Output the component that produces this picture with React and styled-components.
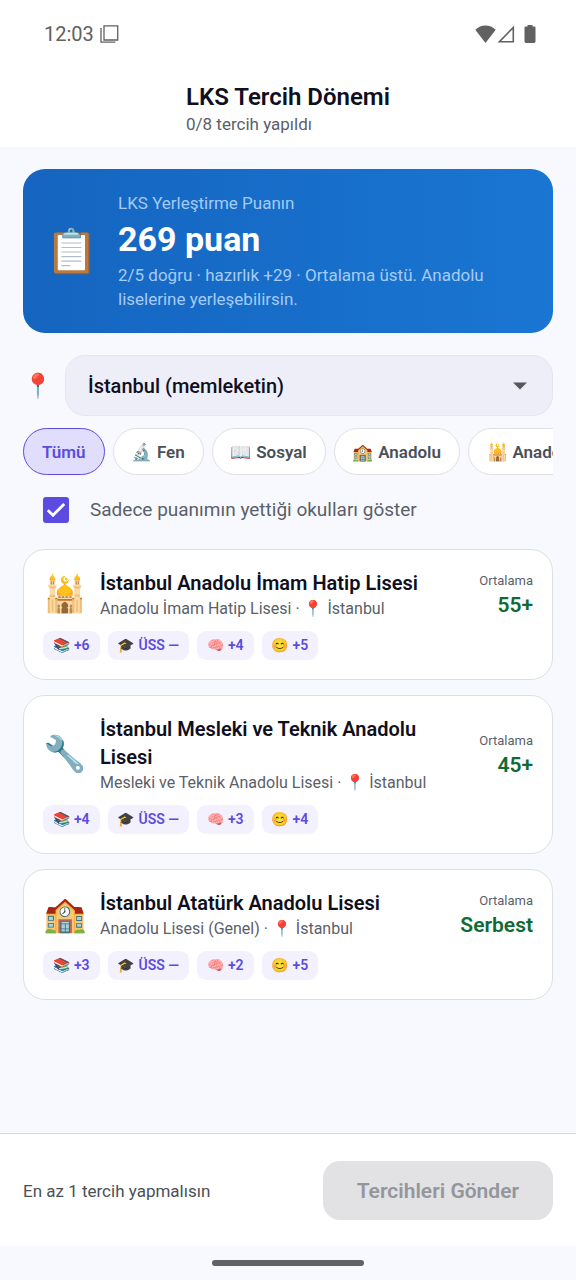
import React, { useState } from "react";
import styled, { createGlobalStyle, css } from "styled-components";

const GlobalStyle = createGlobalStyle`
  *, *::before, *::after {
    box-sizing: border-box;
  }

  body {
    margin: 0;
    background: #f8f9ff;
    color: #0f0f1e;
    font-family: Roboto, "Noto Color Emoji", "Liberation Sans", sans-serif;
  }

  button, select, input {
    font-family: inherit;
  }
`;

const Screen = styled.div`
  min-height: 100vh;
  display: flex;
  flex-direction: column;
`;

const Top = styled.div`
  padding-bottom: 11px;
  background: #fff;
`;

const StatusBar = styled.div`
  display: flex;
  align-items: center;
  justify-content: space-between;
  height: 68px;
  padding: 0 40px 0 44px;
  color: #616161;
  font-size: 20px;
`;

const Clock = styled.div`
  display: flex;
  align-items: center;
  gap: 6px;
`;

const StatusIcons = styled.div`
  display: flex;
  align-items: center;

  svg:last-child {
    margin-left: 9px;
  }
`;

const Header = styled.header`
  display: flex;
  flex-direction: column;
  align-items: flex-start;
  width: fit-content;
  margin: 0 auto;
  padding-top: 14px;
`;

const Title = styled.h1`
  margin: 0;
  font-size: 24px;
  line-height: 30px;
  font-weight: 600;
`;

const Subtitle = styled.p`
  margin: 0;
  color: #5a5f69;
  font-size: 17px;
  line-height: 24px;
`;

const Main = styled.main`
  flex: 1;
  padding: 22px 23px;
`;

const ScoreCard = styled.section`
  display: flex;
  align-items: center;
  gap: 19px;
  padding: 22px;
  border-radius: 22px;
  background: linear-gradient(to right, #1565c0, #1976d2);
  color: #fff;
`;

const ScoreIcon = styled.span`
  width: 54px;
  font-size: 43px;
  line-height: 50px;
  text-align: center;
`;

const ScoreText = styled.div`
  flex: 1;
  color: #a6cbf2;
  font-size: 17px;
  line-height: 24px;
`;

const ScoreValue = styled.strong`
  display: block;
  color: #fff;
  font-size: 34px;
  line-height: 48px;
  font-weight: 700;
`;

const CityRow = styled.label`
  display: flex;
  align-items: center;
  gap: 12px;
  margin-top: 22px;
`;

const CityPin = styled.span`
  width: 30px;
  font-size: 24px;
  text-align: center;
`;

const SelectBox = styled.span`
  flex: 1;
  display: grid;
  align-items: center;

  > * {
    grid-area: 1 / 1;
  }

  svg {
    justify-self: end;
    margin-right: 26px;
    pointer-events: none;
  }
`;

const Select = styled.select`
  appearance: none;
  width: 100%;
  height: 61px;
  padding: 0 50px 0 22px;
  border: 1px solid #e6e6f2;
  border-radius: 20px;
  background: #eeeef9;
  color: #0f0f1e;
  font-size: 20px;
  font-weight: 500;
`;

const Filters = styled.div`
  display: flex;
  gap: 8px;
  margin-top: 12px;
  overflow-x: auto;
  scrollbar-width: none;
`;

const Filter = styled.button`
  flex: none;
  height: 47px;
  padding: 0 18px;
  border: 1px solid #e0e0e4;
  border-radius: 24px;
  background: #fff;
  color: #4b5058;
  font-size: 17px;
  font-weight: 600;
  white-space: nowrap;

  ${({ $active }) =>
    $active &&
    css`
      border-color: #5b4be0;
      background: #e0defc;
      color: #5b4be0;
    `};
`;

const CheckRow = styled.label`
  display: flex;
  align-items: center;
  gap: 21px;
  margin: 21px 20px 26px;
  color: #5a5f69;
  font-size: 19px;
  line-height: 27px;
`;

const CheckBox = styled.span`
  display: grid;
  place-items: center;

  > * {
    grid-area: 1 / 1;
  }

  svg {
    pointer-events: none;
  }
`;

const CheckInput = styled.input`
  appearance: none;
  width: 26px;
  height: 26px;
  margin: 0;
  border: 2px solid #5b4be0;
  border-radius: 3px;

  &:checked {
    background: #5b4be0;
  }
`;

const SchoolList = styled.div`
  display: flex;
  flex-direction: column;
  gap: 15px;
`;

const Card = styled.article`
  padding: 19px;
  border: 1px solid #dedfe3;
  border-radius: 22px;
  background: #fff;
`;

const CardHead = styled.div`
  display: flex;
  align-items: center;
`;

const SchoolIcon = styled.span`
  width: 43px;
  margin-right: 14px;
  font-size: 35px;
  line-height: 44px;
  text-align: center;
`;

const SchoolText = styled.div`
  flex: 1;
`;

const SchoolName = styled.h2`
  margin: 0;
  font-size: 20px;
  line-height: 28px;
  font-weight: 600;
`;

const SchoolKind = styled.p`
  margin: 0;
  color: #5a5f69;
  font-size: 16px;
  line-height: 23px;
`;

const Average = styled.div`
  margin-left: 14px;
  color: #5a5f69;
  font-size: 13px;
  line-height: 20px;
  text-align: right;
`;

const AverageValue = styled.strong`
  display: block;
  color: #0f6b34;
  font-size: 21px;
  line-height: 28px;
  font-weight: 600;
`;

const Stats = styled.div`
  display: flex;
  gap: 8px;
  margin-top: 11px;
`;

const Stat = styled.span`
  padding: 0 10px;
  border-radius: 9px;
  background: #f3f1fd;
  color: #5b4be0;
  font-size: 14px;
  line-height: 29px;
  font-weight: 600;
`;

const Footer = styled.footer`
  display: flex;
  align-items: center;
  justify-content: space-between;
  padding: 27px 23px 26px;
  border-top: 1px solid #d5d8dc;
  background: #fff;
  color: #4b5058;
  font-size: 17px;
`;

const SubmitButton = styled.button`
  height: 59px;
  padding: 0 34px;
  border: 0;
  border-radius: 17px;
  background: #e2e2e5;
  color: #95959c;
  font-size: 21px;
  font-weight: 600;
`;

const NavBar = styled.div`
  display: flex;
  justify-content: center;
  align-items: center;
  height: 34px;
`;

const NavHandle = styled.span`
  width: 152px;
  height: 6px;
  border-radius: 3px;
  background: #606266;
`;

const CopyIcon = () => (
  <svg width="19" height="18" viewBox="0 0 19 18" fill="none" stroke="#616161">
    <path d="M4 .8H17.700V15H4ZM1 3V17.200H15.300" strokeWidth="1.300" />
  </svg>
);

const WifiIcon = () => (
  <svg width="22" height="18" viewBox="0 0 22 18" fill="#616161">
    <path d="M10.500 18 .3 4.800C5.800 -1 15.200 -1 20.700 4.800Z" />
  </svg>
);

const SignalIcon = () => (
  <svg width="18" height="18" viewBox="0 0 18 18" fill="none" stroke="#616161">
    <path d="M16.300 2.400V16.800H2.400Z" strokeWidth="1.600" />
  </svg>
);

const BatteryIcon = () => (
  <svg width="12" height="18" viewBox="0 0 12 18" fill="#616161">
    <path d="M3.500 0h5v1.600H10.500Q11.500 1.600 11.500 2.800V16.600Q11.500 18 10 18H2Q.5 18 .5 16.600V2.800Q.5 1.600 1.500 1.600H3.500Z" />
  </svg>
);

const filters = ["Tümü", "🔬 Fen", "📖 Sosyal", "🏫 Anadolu", "🕌 Anadolu İmam Hatip"];

const schools = [
  {
    icon: "🕌",
    name: "İstanbul Anadolu İmam Hatip Lisesi",
    kind: "Anadolu İmam Hatip Lisesi",
    average: "55+",
    stats: ["📚 +6", "🎓 ÜSS —", "🧠 +4", "😊 +5"]
  },
  {
    icon: "🔧",
    name: "İstanbul Mesleki ve Teknik Anadolu Lisesi",
    kind: "Mesleki ve Teknik Anadolu Lisesi",
    average: "45+",
    stats: ["📚 +4", "🎓 ÜSS —", "🧠 +3", "😊 +4"]
  },
  {
    icon: "🏫",
    name: "İstanbul Atatürk Anadolu Lisesi",
    kind: "Anadolu Lisesi (Genel)",
    average: "Serbest",
    stats: ["📚 +3", "🎓 ÜSS —", "🧠 +2", "😊 +5"]
  }
];

const School = ({ school: { icon, name, kind, average, stats } }) => (
  <Card>
    <CardHead>
      <SchoolIcon>{icon}</SchoolIcon>
      <SchoolText>
        <SchoolName>{name}</SchoolName>
        <SchoolKind>{kind} · 📍 İstanbul</SchoolKind>
      </SchoolText>
      <Average>
        Ortalama
        <AverageValue>{average}</AverageValue>
      </Average>
    </CardHead>
    <Stats>
      {stats.map(stat => (
        <Stat key={stat}>{stat}</Stat>
      ))}
    </Stats>
  </Card>
);

const App = () => {
  const [filter, setFilter] = useState(filters[0]);
  const [onlyReachable, setOnlyReachable] = useState(true);

  return (
    <Screen>
      <GlobalStyle />
      <Top>
        <StatusBar>
          <Clock>
            12:03
            <CopyIcon />
          </Clock>
          <StatusIcons>
            <WifiIcon />
            <SignalIcon />
            <BatteryIcon />
          </StatusIcons>
        </StatusBar>
        <Header>
          <Title>LKS Tercih Dönemi</Title>
          <Subtitle>0/8 tercih yapıldı</Subtitle>
        </Header>
      </Top>
      <Main>
        <ScoreCard>
          <ScoreIcon>📋</ScoreIcon>
          <ScoreText>
            LKS Yerleştirme Puanın
            <ScoreValue>269 puan</ScoreValue>
            2/5 doğru · hazırlık +29 · Ortalama üstü. Anadolu liselerine
            yerleşebilirsin.
          </ScoreText>
        </ScoreCard>
        <CityRow>
          <CityPin>📍</CityPin>
          <SelectBox>
            <Select defaultValue="istanbul">
              <option value="istanbul">İstanbul (memleketin)</option>
            </Select>
            <svg width="14" height="8" viewBox="0 0 14 8" fill="#55585f">
              <path d="M0 .5h14L7 7.500Z" />
            </svg>
          </SelectBox>
        </CityRow>
        <Filters>
          {filters.map(name => (
            <Filter
              key={name}
              type="button"
              aria-pressed={name === filter}
              $active={name === filter}
              onClick={() => setFilter(name)}
            >
              {name}
            </Filter>
          ))}
        </Filters>
        <CheckRow>
          <CheckBox>
            <CheckInput
              type="checkbox"
              checked={onlyReachable}
              onChange={e => setOnlyReachable(e.target.checked)}
            />
            <svg width="20" height="16" viewBox="0 0 20 16" fill="none">
              <path d="M1.800 8.200 7 13.200 18.200 2" stroke="#fff" strokeWidth="2.800" />
            </svg>
          </CheckBox>
          Sadece puanımın yettiği okulları göster
        </CheckRow>
        <SchoolList>
          {schools.map(school => (
            <School key={school.name} school={school} />
          ))}
        </SchoolList>
      </Main>
      <Footer>
        En az 1 tercih yapmalısın
        <SubmitButton type="button" disabled>
          Tercihleri Gönder
        </SubmitButton>
      </Footer>
      <NavBar>
        <NavHandle />
      </NavBar>
    </Screen>
  );
};

export default App;
